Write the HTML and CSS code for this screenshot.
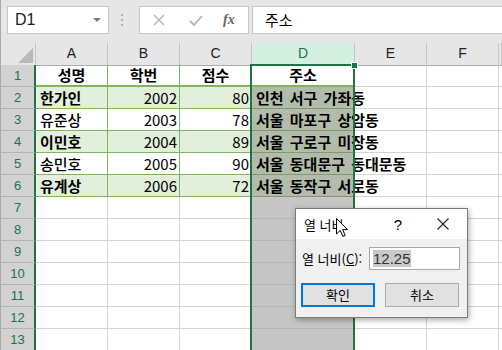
FILE: index.html
```html
<!DOCTYPE html>
<html lang="ko">
<head>
  <meta charset="UTF-8">
  <title>열 너비</title>
  <link rel="stylesheet" href="styles.css">
</head>
<body>

<div class="formula-bar">
  <div class="namebox">
    <span>D1</span>
    <svg width="8" height="5" viewBox="0 0 8 5"><path d="M0 0 L8 0 L4 4 Z" fill="#7a7a7a"/></svg>
  </div>
  <div class="grip">
    <svg width="3" height="13" viewBox="0 0 3 13"><rect x="0" y="0" width="2" height="2" fill="#b3b3b3"/><rect x="0" y="5" width="2" height="2" fill="#b3b3b3"/><rect x="0" y="10" width="2" height="2" fill="#b3b3b3"/></svg>
  </div>
  <div class="fx-box">
    <svg class="fx-cancel" width="12" height="12" viewBox="0 0 12 12"><path d="M1 1 L11 11 M11 1 L1 11" stroke="#b4b4b4" stroke-width="1.4"/></svg>
    <svg class="fx-ok" width="14" height="11" viewBox="0 0 14 11"><path d="M1 6 L5 10 L13 1" stroke="#b4b4b4" stroke-width="1.8" fill="none"/></svg>
    <span class="fx">fx</span>
  </div>
  <div class="formula-input">주소</div>
</div>

<div class="sheet">
  <div class="row hrow">
    <div class="corner"><div class="tri"></div></div>
    <div class="h">A</div><div class="h">B</div><div class="h">C</div><div class="h on">D</div><div class="h">E</div><div class="h">F</div><div class="h"></div>
  </div>

  <div class="row r1">
    <div class="rh">1</div>
    <div class="c t hd">성명</div><div class="c t hd">학번</div><div class="c t hd">점수</div><div class="c t hd">주소</div>
    <div class="c"></div><div class="c"></div><div class="c"></div>
  </div>
  <div class="row">
    <div class="rh">2</div>
    <div class="c t band b">한가인</div><div class="c t band num">2002</div><div class="c t band num">80</div><div class="c t dsel b">인천 서구 가좌동</div>
    <div class="c"></div><div class="c"></div><div class="c"></div>
  </div>
  <div class="row">
    <div class="rh">3</div>
    <div class="c t m">유준상</div><div class="c t num">2003</div><div class="c t num">78</div><div class="c t dsel b">서울 마포구 상암동</div>
    <div class="c"></div><div class="c"></div><div class="c"></div>
  </div>
  <div class="row">
    <div class="rh">4</div>
    <div class="c t band b">이민호</div><div class="c t band num">2004</div><div class="c t band num">89</div><div class="c t dsel b">서울 구로구 미장동</div>
    <div class="c"></div><div class="c"></div><div class="c"></div>
  </div>
  <div class="row">
    <div class="rh">5</div>
    <div class="c t m">송민호</div><div class="c t num">2005</div><div class="c t num">90</div><div class="c t dsel b">서울 동대문구 동대문동</div>
    <div class="c"></div><div class="c"></div><div class="c"></div>
  </div>
  <div class="row">
    <div class="rh">6</div>
    <div class="c t band b">유계상</div><div class="c t band num">2006</div><div class="c t band num">72</div><div class="c t dsel b">서울 동작구 서로동</div>
    <div class="c"></div><div class="c"></div><div class="c"></div>
  </div>

  <div class="row"><div class="rh">7</div><div class="c"></div><div class="c"></div><div class="c"></div><div class="c dgray"></div><div class="c"></div><div class="c"></div><div class="c"></div></div>
  <div class="row"><div class="rh">8</div><div class="c"></div><div class="c"></div><div class="c"></div><div class="c dgray"></div><div class="c"></div><div class="c"></div><div class="c"></div></div>
  <div class="row"><div class="rh">9</div><div class="c"></div><div class="c"></div><div class="c"></div><div class="c dgray"></div><div class="c"></div><div class="c"></div><div class="c"></div></div>
  <div class="row"><div class="rh">10</div><div class="c"></div><div class="c"></div><div class="c"></div><div class="c dgray"></div><div class="c"></div><div class="c"></div><div class="c"></div></div>
  <div class="row"><div class="rh">11</div><div class="c"></div><div class="c"></div><div class="c"></div><div class="c dgray"></div><div class="c"></div><div class="c"></div><div class="c"></div></div>
  <div class="row"><div class="rh">12</div><div class="c"></div><div class="c"></div><div class="c"></div><div class="c dgray"></div><div class="c"></div><div class="c"></div><div class="c"></div></div>
  <div class="row"><div class="rh">13</div><div class="c"></div><div class="c"></div><div class="c"></div><div class="c dgray"></div><div class="c"></div><div class="c"></div><div class="c"></div></div>

  <div class="col-sel"></div>
  <div class="fill-handle"></div>
</div>

<div class="dialog">
  <div class="dlg-title">
    <span>열 너비</span>
    <span class="q">?</span>
    <span class="x">
      <svg width="12" height="12" viewBox="0 0 12 12"><path d="M0.5 0.5 L11.5 11.5 M11.5 0.5 L0.5 11.5" stroke="#222" stroke-width="1.1"/></svg>
    </span>
  </div>
  <div class="dlg-body">
    <div class="field">
      <span class="label">열 너비(<u>C</u>):</span>
      <div class="input"><span class="picked">12.25</span></div>
    </div>
    <div class="buttons">
      <div class="btn primary">확인</div>
      <div class="btn">취소</div>
    </div>
  </div>
</div>

<svg class="cursor" width="13" height="20" viewBox="0 0 13 20">
  <path d="M0.5 0.5 L0.5 16 L4.2 12.4 L6.8 18.5 L9.2 17.5 L6.7 11.6 L11.5 11.6 Z" fill="#fff" stroke="#000" stroke-width="1"/>
</svg>

</body>
</html>
```

FILE: styles.css
```css
body {
  margin: 0;
  width: 502px;
  height: 350px;
  overflow: hidden;
  position: relative;
  background: #fff;
  font-family: "Noto Sans CJK KR", "Noto Sans", sans-serif;
  color: #000;
}

/* formula bar */
.formula-bar {
  height: 43px;
  box-sizing: border-box;
  padding-top: 6px;
  background: #e6e6e6;
  border-left: 1px solid #a9a9a9;
  display: flex;
  align-items: flex-start;
}

.namebox {
  margin-left: 6px;
  width: 102px;
  height: 28px;
  box-sizing: border-box;
  background: #fff;
  border: 1px solid #c6c6c6;
  display: flex;
  align-items: center;
  justify-content: space-between;
  padding: 0 7px 0 7px;
  font: 16px "Liberation Sans", sans-serif;
  color: #222;
}

.grip {
  width: 26px;
  height: 28px;
  display: flex;
  align-items: center;
  justify-content: center;
}

.fx-box {
  margin-left: 4px;
  width: 110px;
  height: 28px;
  box-sizing: border-box;
  background: #fff;
  border: 1px solid #c6c6c6;
  display: flex;
  align-items: center;
}

.fx-cancel {
  margin-left: 13px;
}

.fx-ok {
  margin-left: 24px;
}

.fx {
  margin-left: 20px;
  font: italic bold 14px "Liberation Serif", serif;
  color: #666;
}

.formula-input {
  margin-left: 3px;
  flex: 1;
  height: 28px;
  box-sizing: border-box;
  background: #fff;
  border: 1px solid #c6c6c6;
  border-right: none;
  padding-left: 12px;
  font-size: 15px;
  line-height: 25px;
}

/* sheet grid */
.sheet {
  position: relative;
}

.row {
  display: grid;
  grid-template-columns: 36px 72px 72px 72px 103px 72px 72px 1fr;
  height: 22px;
}

.row > div {
  box-sizing: border-box;
}

.corner {
  background: #e6e6e6;
  border-left: 1px solid #a9a9a9;
  border-right: 1px solid #c6c6c6;
  border-bottom: 1px solid #ababab;
  display: flex;
  justify-content: flex-end;
  align-items: flex-end;
  padding: 0 2px 2px 0;
}

.tri {
  width: 15px;
  height: 15px;
  background: #b8b8b8;
  clip-path: polygon(100% 0, 100% 100%, 0 100%);
}

.h {
  background: #e6e6e6;
  border-right: 1px solid #c6c6c6;
  border-bottom: 1px solid #ababab;
  text-align: center;
  font: 14px "Liberation Sans", sans-serif;
  line-height: 21px;
  color: #222;
}

.h.on {
  background: #d3f0e0;
  color: #217346;
  border-bottom: 2px solid #217346;
}

.rh {
  background: #d2d2d2;
  border-left: 1px solid #a9a9a9;
  border-right: 2px solid #217346;
  border-bottom: 1px solid #b4b4b4;
  text-align: center;
  font: 13px "Liberation Sans", sans-serif;
  line-height: 21px;
  color: #217346;
}

.c {
  border-right: 1px solid #d4d4d4;
  border-bottom: 1px solid #d4d4d4;
  padding: 0 4px;
  font-size: 15px;
  line-height: 21px;
  white-space: nowrap;
}

.t {
  border-color: #80b65a;
}

.r1 .t {
  border-bottom-width: 2px;
  line-height: 20px;
}

.band {
  background: #e2efda;
}

.hd {
  text-align: center;
  font-weight: bold;
}

.b {
  font-weight: bold;
}

.m {
  font-weight: 500;
}

.num {
  text-align: right;
  padding-right: 2px;
}

.dsel {
  background: #b3bcab;
  border-color: #7f9a6c;
  word-spacing: 2px;
}

.dgray {
  background: #c6c6c6;
  border-color: #b6b6b6;
}

/* selected column outline */
.col-sel {
  position: absolute;
  left: 250px;
  top: 21px;
  width: 105px;
  height: 300px;
  box-sizing: border-box;
  border: 2px solid #217346;
  border-bottom: none;
}

.fill-handle {
  position: absolute;
  left: 351px;
  top: 19px;
  width: 5px;
  height: 5px;
  background: #217346;
  border: 1px solid #fff;
}

/* dialog */
.dialog {
  position: absolute;
  left: 295px;
  top: 208px;
  width: 173px;
  height: 110px;
  box-sizing: border-box;
  background: #f0f0f0;
  border: 1px solid #7c7c7c;
  box-shadow: 1px 2px 6px rgba(0, 0, 0, 0.35);
  font-size: 13px;
  color: #000;
}

.dlg-title {
  height: 30px;
  background: #fff;
  display: flex;
  align-items: center;
  padding-left: 8px;
}

.q {
  margin-left: auto;
  width: 20px;
  text-align: center;
  font: 15px "Liberation Sans", sans-serif;
}

.x {
  width: 30px;
  margin-left: 20px;
  margin-right: 9px;
  display: flex;
  justify-content: center;
}

.dlg-body {
  padding-top: 8px;
}

.field {
  display: flex;
  align-items: center;
}

.label {
  margin-left: 6px;
}

.input {
  margin-left: auto;
  margin-right: 7px;
  width: 91px;
  height: 23px;
  box-sizing: border-box;
  background: #fff;
  border: 1px solid #a8a8a8;
  padding: 2px 0 0 3px;
  font: 15px "Liberation Sans", sans-serif;
  line-height: 17px;
}

.picked {
  background: #c8c8c8;
  color: #333;
}

.buttons {
  margin-top: 13px;
  display: flex;
  justify-content: space-between;
  padding: 0 8px 0 5px;
}

.btn {
  width: 74px;
  height: 24px;
  box-sizing: border-box;
  background: #e1e1e1;
  border: 1px solid #adadad;
  text-align: center;
  line-height: 21px;
}

.btn.primary {
  border: 2px solid #0078d7;
  line-height: 19px;
}

.cursor {
  position: absolute;
  left: 336px;
  top: 218px;
}
```
